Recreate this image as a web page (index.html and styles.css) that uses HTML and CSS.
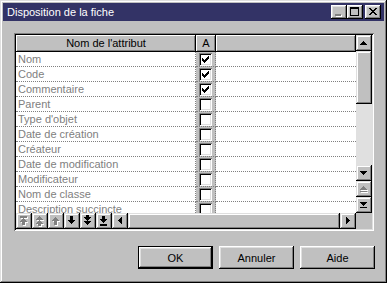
FILE: index.html
```html
<!DOCTYPE html>
<html lang="fr">
<head>
<meta charset="utf-8">
<title>Disposition de la fiche</title>
<link rel="stylesheet" href="styles.css">
</head>
<body>
<div class="window">
  <div class="titlebar">
    <span class="title">Disposition de la fiche</span>
    <div class="tbtns">
      <div class="tbtn"><svg width="16" height="14" viewBox="0 0 16 14" shape-rendering="crispEdges"><path fill="#fff" d="M5 10h6v2H5z"/><path fill="#808080" d="M4 9h6v2H4z"/></svg></div>
      <div class="tbtn"><svg width="16" height="14" viewBox="0 0 16 14" shape-rendering="crispEdges"><path fill="#000" d="M3 2h9v2H3z M3 4h1v6H3z M11 4h1v6h-1z M3 10h9v1H3z"/></svg></div>
      <div class="tbtn close"><svg width="16" height="14" viewBox="0 0 16 14" shape-rendering="crispEdges"><path fill="#000" d="M4 3h2v1H4z M10 3h2v1h-2z M5 4h2v1H5z M9 4h2v1H9z M6 5h4v1H6z M7 6h2v1H7z M6 7h4v1H6z M5 8h2v1H5z M9 8h2v1H9z M4 9h2v1H4z M10 9h2v1h-2z"/></svg></div>
    </div>
  </div>
  <div class="client">
    <div class="grid">
      <div class="grid-main">
        <div class="cols">
          <div class="header">
            <div class="hcell h1">Nom de l'attribut</div>
            <div class="hcell h2">A</div>
            <div class="hcell h3"></div>
          </div>
          <div class="rows">
            <div class="row"><div class="c1">Nom</div><div class="c2"><div class="cb"><svg width="7" height="7" viewBox="0 0 7 7" shape-rendering="crispEdges"><path d="M6 0h1v1H6z M5 1h2v1H5z M0 2h1v1H0z M4 2h3v1H4z M0 3h2v1H0z M3 3h3v1H3z M0 4h5v1H0z M1 5h3v1H1z M2 6h1v1H2z"/></svg></div></div><div class="c3"></div></div>
            <div class="row"><div class="c1">Code</div><div class="c2"><div class="cb"><svg width="7" height="7" viewBox="0 0 7 7" shape-rendering="crispEdges"><path d="M6 0h1v1H6z M5 1h2v1H5z M0 2h1v1H0z M4 2h3v1H4z M0 3h2v1H0z M3 3h3v1H3z M0 4h5v1H0z M1 5h3v1H1z M2 6h1v1H2z"/></svg></div></div><div class="c3"></div></div>
            <div class="row"><div class="c1">Commentaire</div><div class="c2"><div class="cb"><svg width="7" height="7" viewBox="0 0 7 7" shape-rendering="crispEdges"><path d="M6 0h1v1H6z M5 1h2v1H5z M0 2h1v1H0z M4 2h3v1H4z M0 3h2v1H0z M3 3h3v1H3z M0 4h5v1H0z M1 5h3v1H1z M2 6h1v1H2z"/></svg></div></div><div class="c3"></div></div>
            <div class="row"><div class="c1">Parent</div><div class="c2"><div class="cb"></div></div><div class="c3"></div></div>
            <div class="row"><div class="c1">Type d'objet</div><div class="c2"><div class="cb"></div></div><div class="c3"></div></div>
            <div class="row"><div class="c1">Date de création</div><div class="c2"><div class="cb"></div></div><div class="c3"></div></div>
            <div class="row"><div class="c1">Créateur</div><div class="c2"><div class="cb"></div></div><div class="c3"></div></div>
            <div class="row"><div class="c1">Date de modification</div><div class="c2"><div class="cb"></div></div><div class="c3"></div></div>
            <div class="row"><div class="c1">Modificateur</div><div class="c2"><div class="cb"></div></div><div class="c3"></div></div>
            <div class="row"><div class="c1">Nom de classe</div><div class="c2"><div class="cb"></div></div><div class="c3"></div></div>
            <div class="row"><div class="c1">Description succincte</div><div class="c2"><div class="cb"></div></div><div class="c3"></div></div>
          </div>
        </div>
        <div class="vscroll">
          <div class="sb"><svg width="16" height="16" viewBox="0 0 16 16" shape-rendering="crispEdges"><path d="M7 6h1v1H7z M6 7h3v1H6z M5 8h5v1H5z M4 9h7v1H4z"/></svg></div>
          <div class="thumb"></div>
          <div class="track"></div>
          <div class="sb"><svg width="16" height="16" viewBox="0 0 16 16" shape-rendering="crispEdges"><path d="M4 6h7v1H4z M5 7h5v1H5z M6 8h3v1H6z M7 9h1v1H7z"/></svg></div>
          <div class="sb"><svg width="16" height="16" viewBox="0 0 16 16" shape-rendering="crispEdges"><path fill="#fff" d="M8 6h1v1H8z M7 7h3v1H7z M6 8h5v1H6z M5 9h7v1H5z M5 11h7v1H5z"/><path fill="#808080" d="M7 5h1v1H7z M6 6h3v1H6z M5 7h5v1H5z M4 8h7v1H4z M4 10h7v1H4z"/></svg></div>
          <div class="sb"><svg width="16" height="16" viewBox="0 0 16 16" shape-rendering="crispEdges"><path d="M4 5h7v1H4z M5 6h5v1H5z M6 7h3v1H6z M7 8h1v1H7z M4 10h7v1H4z"/></svg></div>
        </div>
      </div>
      <div class="grid-bottom">
        <div class="sb"><svg width="16" height="16" viewBox="0 0 16 16" shape-rendering="crispEdges"><path fill="#fff" d="M5 4h7v2H5z M8 6h1v1H8z M7 7h3v1H7z M6 8h5v1H6z M5 9h7v1H5z M7 10h3v3H7z"/><path fill="#808080" d="M4 3h7v2H4z M7 5h1v1H7z M6 6h3v1H6z M5 7h5v1H5z M4 8h7v1H4z M6 9h3v3H6z"/></svg></div>
        <div class="sb"><svg width="16" height="16" viewBox="0 0 16 16" shape-rendering="crispEdges"><path fill="#fff" d="M8 4h1v1H8z M7 5h3v1H7z M6 6h5v1H6z M5 7h7v1H5z M8 8h1v1H8z M7 9h3v1H7z M6 10h5v1H6z M5 11h7v1H5z M7 12h3v2H7z"/><path fill="#808080" d="M7 3h1v1H7z M6 4h3v1H6z M5 5h5v1H5z M4 6h7v1H4z M7 7h1v1H7z M6 8h3v1H6z M5 9h5v1H5z M4 10h7v1H4z M6 11h3v2H6z"/></svg></div>
        <div class="sb"><svg width="16" height="16" viewBox="0 0 16 16" shape-rendering="crispEdges"><path fill="#fff" d="M8 5h1v1H8z M7 6h3v1H7z M6 7h5v1H6z M5 8h7v1H5z M7 9h3v4H7z"/><path fill="#808080" d="M7 4h1v1H7z M6 5h3v1H6z M5 6h5v1H5z M4 7h7v1H4z M6 8h3v4H6z"/></svg></div>
        <div class="sb"><svg width="16" height="16" viewBox="0 0 16 16" shape-rendering="crispEdges"><path d="M6 3h3v4H6z M4 7h7v1H4z M5 8h5v1H5z M6 9h3v1H6z M7 10h1v1H7z"/></svg></div>
        <div class="sb"><svg width="16" height="16" viewBox="0 0 16 16" shape-rendering="crispEdges"><path d="M6 2h3v2H6z M4 4h7v1H4z M5 5h5v1H5z M6 6h3v1H6z M7 7h1v1H7z M4 8h7v1H4z M5 9h5v1H5z M6 10h3v1H6z M7 11h1v1H7z"/></svg></div>
        <div class="sb"><svg width="16" height="16" viewBox="0 0 16 16" shape-rendering="crispEdges"><path d="M6 3h3v3H6z M4 6h7v1H4z M5 7h5v1H5z M6 8h3v1H6z M7 9h1v1H7z M4 11h7v2H4z"/></svg></div>
        <div class="sb"><svg width="16" height="16" viewBox="0 0 16 16" shape-rendering="crispEdges"><path d="M6 7h1v1H6z M7 6h1v3H7z M8 5h1v5H8z M9 4h1v7H9z"/></svg></div>
        <div class="hthumb"></div>
        <div class="sb"><svg width="16" height="16" viewBox="0 0 16 16" shape-rendering="crispEdges"><path d="M6 4h1v7H6z M7 5h1v5H7z M8 6h1v3H8z M9 7h1v1H9z"/></svg></div>
        <div class="corner"></div>
      </div>
    </div>
    <div class="actions">
      <div class="btn default">OK</div>
      <div class="btn">Annuler</div>
      <div class="btn">Aide</div>
    </div>
  </div>
</div>
</body>
</html>
```

FILE: styles.css
```css
* { box-sizing: border-box; }
html, body { margin: 0; padding: 0; }
body {
  width: 387px;
  height: 283px;
  overflow: hidden;
  background: #c0c0c0;
  font-family: "Liberation Sans", Arial, sans-serif;
  font-size: 11px;
  color: #000;
}
svg { display: block; }

.window {
  width: 387px;
  height: 283px;
  padding: 3px;
  background: #c0c0c0;
  box-shadow: inset -1px -1px #000, inset 1px 1px #dfdfdf, inset -2px -2px #808080, inset 2px 2px #fff;
  display: flex;
  flex-direction: column;
}

.titlebar {
  height: 18px;
  flex: none;
  background: #333366;
  color: #fff;
  display: flex;
  align-items: center;
  padding: 0 3px 0 4px;
}
.title { flex: 1; line-height: 18px; white-space: nowrap; }
.tbtns { display: flex; }
.tbtn {
  width: 16px;
  height: 14px;
  background: #c0c0c0;
  box-shadow: inset -1px -1px #000, inset 1px 1px #fff, inset -2px -2px #808080, inset 2px 2px #dfdfdf;
}
.tbtn.close { margin-left: 2px; }

.client {
  flex: 1;
  display: flex;
  flex-direction: column;
  padding: 12px 10px 0 11px;
}

.grid {
  width: 360px;
  height: 198px;
  padding: 2px;
  box-shadow: inset 1px 1px #808080, inset -1px -1px #fff, inset 2px 2px #000, inset -2px -2px #dfdfdf;
  display: flex;
  flex-direction: column;
}
.grid-main { display: flex; height: 178px; flex: none; }
.cols { width: 340px; display: flex; flex-direction: column; background: #fff; }

.header { display: flex; height: 17px; flex: none; }
.hcell {
  background: #c0c0c0;
  box-shadow: inset -1px -1px #000, inset 1px 1px #fff, inset -2px -2px #808080;
  display: flex;
  align-items: center;
  justify-content: center;
  line-height: 17px;
}
.h1 { width: 180px; }
.h2 { width: 20px; }
.h3 { flex: 1; }

.rows { flex: 1; overflow: hidden; }
.row { display: flex; height: 15px; }
.c1 {
  width: 180px;
  padding-left: 2px;
  color: #808080;
  line-height: 14px;
  white-space: nowrap;
  overflow: hidden;
  border-right: 1px dotted #808080;
  border-bottom: 1px dotted #808080;
}
.c2 {
  width: 20px;
  background: #c0c0c0;
  padding: 0 0 0 3px;
  display: flex;
  align-items: center;
  border-right: 1px dotted #808080;
  border-bottom: 1px dotted #808080;
}
.c3 { flex: 1; border-bottom: 1px dotted #808080; }
.cb {
  width: 13px;
  height: 13px;
  padding: 3px;
  background: #fff;
  box-shadow: inset 1px 1px #808080, inset -1px -1px #fff, inset 2px 2px #000, inset -2px -2px #dfdfdf;
}

.vscroll { width: 16px; display: flex; flex-direction: column; }
.sb {
  width: 16px;
  height: 16px;
  flex: none;
  background: #c0c0c0;
  box-shadow: inset -1px -1px #000, inset 1px 1px #dfdfdf, inset -2px -2px #808080, inset 2px 2px #fff;
}
.thumb {
  height: 53px;
  flex: none;
  background: #c0c0c0;
  box-shadow: inset -1px -1px #000, inset 1px 1px #dfdfdf, inset -2px -2px #808080, inset 2px 2px #fff;
}
.track { flex: 1; background: #e0e0e0; }

.grid-bottom { display: flex; height: 16px; flex: none; }
.hthumb {
  flex: 1;
  background: #c0c0c0;
  box-shadow: inset -1px -1px #000, inset 1px 1px #dfdfdf, inset -2px -2px #808080, inset 2px 2px #fff;
}
.corner { width: 16px; background: #c0c0c0; }

.actions {
  display: flex;
  justify-content: flex-end;
  gap: 6px;
  margin-top: 15px;
  margin-right: -1px;
}
.btn {
  width: 75px;
  height: 23px;
  background: #c0c0c0;
  display: flex;
  align-items: center;
  justify-content: center;
  box-shadow: inset -1px -1px #000, inset 1px 1px #fff, inset -2px -2px #808080, inset 2px 2px #dfdfdf;
}
.btn.default {
  border: 1px solid #000;
}
```
